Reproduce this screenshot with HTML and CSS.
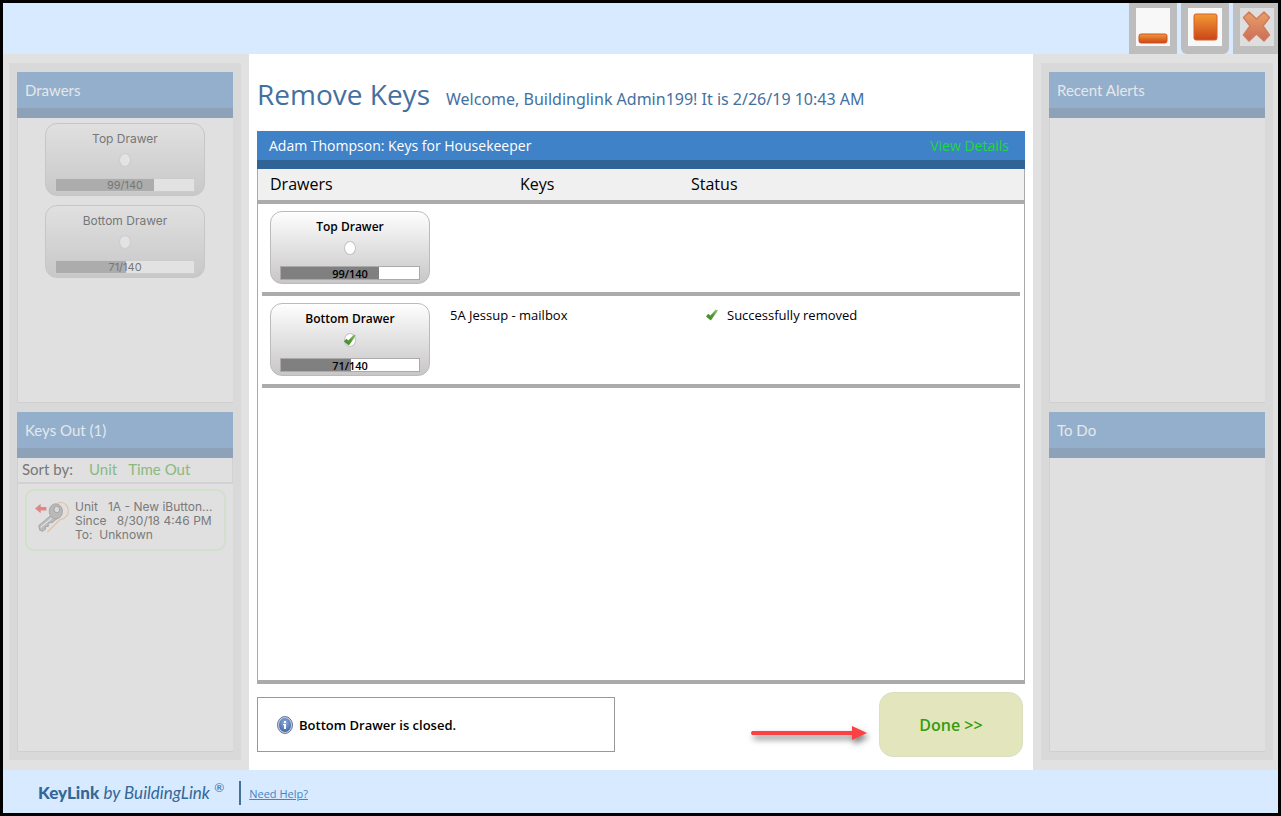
FILE: index.html
```html
<!DOCTYPE html>
<html lang="en">
<head>
<meta charset="utf-8">
<title>KeyLink - Remove Keys</title>
<link rel="stylesheet" href="styles.css">
</head>
<body>
<svg class="defs" aria-hidden="true">
  <defs>
    <linearGradient id="orange" x1="0" y1="0" x2="0" y2="1"><stop offset="0" stop-color="#f39a35"/><stop offset="1" stop-color="#cb4418"/></linearGradient>
    <linearGradient id="coral" x1="0" y1="0" x2="0" y2="1"><stop offset="0" stop-color="#e8a068"/><stop offset="1" stop-color="#cb6d58"/></linearGradient>
    <linearGradient id="green" x1="0" y1="1" x2="1" y2="0"><stop offset="0" stop-color="#3f8a2a"/><stop offset=".5" stop-color="#559632"/><stop offset="1" stop-color="#9cc884"/></linearGradient>
    <radialGradient id="info" cx=".5" cy=".35" r=".65"><stop offset="0" stop-color="#8fb2e2"/><stop offset="1" stop-color="#4464a4"/></radialGradient>
    <symbol id="tick" viewBox="0 0 12 12"><path d="M0 7.400 2.200 4.800 4.400 6.400 9.800.6 12 1.400 4.800 11.400Z" fill="url(#green)"/></symbol>
  </defs>
</svg>
<header class="titlebar">
  <button class="win" aria-label="Minimize"><svg viewBox="0 0 34 38"><rect x="3" y="26" width="28" height="9" rx="2" fill="url(#orange)" stroke="#cf5328"/></svg></button>
  <button class="win win-round" aria-label="Maximize"><svg viewBox="0 0 34 38"><rect x="6" y="6" width="23" height="26" rx="2" fill="url(#orange)" stroke="#d2602e"/></svg></button>
  <button class="win win-dim" aria-label="Close"><svg viewBox="0 0 34 38"><path d="M9 4 16.500 11 24 4 29.500 9.500 23 18 29.500 27 24 33 16.500 26 9 33 3.500 27 10 18 3.500 9.500Z" fill="url(#coral)" stroke="#d17c5e" stroke-width="1.500" stroke-linejoin="round"/></svg></button>
</header>
<div class="workspace">
  <aside class="side">
    <div class="side-inner">
      <section class="panel">
        <h2 class="panel-title">Drawers</h2>
        <div class="drawer-list">
          <div class="drawer muted"><span class="drawer-name">Top Drawer</span><span class="dot"></span><div class="bar"><span class="fill" style="width:70.7%"></span><span class="count">99/140</span></div></div>
          <div class="drawer muted"><span class="drawer-name">Bottom Drawer</span><span class="dot"></span><div class="bar"><span class="fill" style="width:50.7%"></span><span class="count">71/140</span></div></div>
        </div>
      </section>
      <section class="panel">
        <h2 class="panel-title">Keys Out (1)</h2>
        <div class="sort"><span class="sort-label">Sort by:</span><a href="#unit">Unit</a><a href="#time">Time Out</a></div>
        <div class="key-card">
          <svg class="key-icon" viewBox="0 0 38 36">
            <path d="M24 2C32 0 36 6 35 13 34 17 30 19 26 20L13 33" fill="none" stroke="#e3c4a0" stroke-width="1.300"/>
            <path d="M0 8 6 3V6.500H12V10H6V13Z" fill="#dd8886"/>
            <path d="M17 15 4 26 5 31 8 32 11 30V27L14 27V23L18 23 24 18Z" fill="#bbb" stroke="#a4a4a4"/>
            <path d="M6 28 19 17" stroke="#ddd" stroke-width="1.500"/>
            <ellipse cx="22" cy="11" rx="7" ry="8" fill="#b9b9b9" stroke="#a4a4a4"/>
            <ellipse cx="23" cy="9" rx="3" ry="3.500" fill="#d9d9d9" stroke="#a0a0a0"/>
          </svg>
          <div class="key-text"><div>Unit&nbsp;&nbsp; 1A - New iButton...</div><div>Since&nbsp;&nbsp; 8/30/18 4:46 PM</div><div>To:&nbsp; Unknown</div></div>
        </div>
      </section>
    </div>
  </aside>
  <main class="center">
    <div class="heading"><h1>Remove Keys</h1><p>Welcome, Buildinglink Admin199! It is 2/26/19 10:43 AM</p></div>
    <section class="task">
      <div class="task-bar"><h2>Adam Thompson: Keys for Housekeeper</h2><a href="#details">View Details</a></div>
      <div class="task-body">
        <table>
          <colgroup><col class="c1"><col class="c2"><col></colgroup>
          <thead><tr><th>Drawers</th><th class="th-keys">Keys</th><th>Status</th></tr></thead>
          <tbody>
            <tr><td class="td-drawer"><div class="drawer"><span class="drawer-name">Top Drawer</span><span class="dot"></span><div class="bar"><span class="fill" style="width:70.7%"></span><span class="count">99/140</span></div></div></td><td></td><td></td></tr>
            <tr><td class="td-drawer"><div class="drawer"><span class="drawer-name">Bottom Drawer</span><span class="dot"><svg class="tick"><use href="#tick"/></svg></span><div class="bar"><span class="fill" style="width:50.7%"></span><span class="count">71/140</span></div></div></td><td>5A Jessup - mailbox</td><td><div class="status"><svg class="tick"><use href="#tick"/></svg>Successfully removed</div></td></tr>
          </tbody>
        </table>
      </div>
    </section>
    <div class="actions">
      <div class="message" role="status">
        <svg class="info" viewBox="0 0 16 18"><ellipse cx="8" cy="9" rx="7.500" ry="8.500" fill="#c3cfe2" stroke="#64769c"/><ellipse cx="8" cy="9" rx="6" ry="7" fill="url(#info)"/><path d="M7 5h2v2H7zM6 8h3v5H7V9H6z" fill="#fff"/></svg>
        Bottom Drawer is closed.
      </div>
      <svg class="arrow" viewBox="0 0 118 48" aria-hidden="true"><path d="M2 22H102V17L117 24 102 31V26H2Q0 24 2 22Z" fill="#fb4143"/></svg>
      <button class="done">Done &gt;&gt;</button>
    </div>
  </main>
  <aside class="side">
    <div class="side-inner">
      <section class="panel"><h2 class="panel-title">Recent Alerts</h2></section>
      <section class="panel"><h2 class="panel-title">To Do</h2></section>
    </div>
  </aside>
</div>
<footer class="footer">
  <div class="brand"><b>KeyLink</b> <i>by BuildingLink</i> <sup>®</sup></div>
  <a class="help" href="#help">Need Help?</a>
</footer>
</body>
</html>
```
FILE: styles.css
```css
* { box-sizing: border-box; }
body {
  margin: 0;
  min-height: 100vh;
  border: 3px solid #000;
  display: flex;
  flex-direction: column;
  background: #d8eaff;
  font-family: "Open Sans", "Noto Sans", sans-serif;
  font-size: 14px;
  color: #000;
}
h1, h2, p { margin: 0; font-weight: 400; }
button { font: inherit; cursor: pointer; }
.defs { position: absolute; width: 0; height: 0; }

.titlebar { height: 51px; display: flex; justify-content: flex-end; gap: 4px; }
.win { width: 48px; padding: 4px 7px 8px; border: 0; background: #bdbdbd; }
.win svg { display: block; width: 34px; height: 38px; background: #f8f8f8; }
.win-round { border-radius: 0 0 6px 6px; }
.win-dim { width: 45px; padding-right: 4px; background: #bfbfbf; }
.win-dim svg { background: #dedede; }

.workspace { flex: 1; display: grid; grid-template-columns: 246px 1fr 245px; }
.side { display: flex; padding: 9px 8px 10px 6px; background: #e1e1e1; }
.center + .side { padding: 9px 5px 10px 8px; }
.side-inner { flex: 1; display: grid; grid-template-rows: 331fr 339fr; gap: 9px; padding: 9px 8px 8px; background: #d9d9d9; }
.panel { background: #e0e0e0; border: solid #d0d0d0; border-width: 0 0 1px 1px; }
.panel-title {
  height: 46px;
  margin-left: -1px;
  padding: 0 8px;
  border-bottom: 10px solid #8da2b8;
  background: #94afcb;
  color: #e4e8ec;
  font: 15px/36px Lato, sans-serif;
}
.drawer-list { display: flex; flex-direction: column; align-items: center; gap: 9px; padding: 5px 1px 0 0; }

.drawer {
  width: 160px;
  height: 73px;
  padding: 6px 9px 0;
  display: flex;
  flex-direction: column;
  align-items: center;
  border: 1px solid #bbb;
  border-radius: 12px;
  background: linear-gradient(#fefefe, #c8c6c6);
}
.drawer-name { font-size: 12px; font-weight: 600; line-height: 18px; }
.dot { width: 12px; height: 14px; margin: 5px 0 11px; border: 1px solid #c3c3c3; border-radius: 50%; background: #fff; }
.bar { position: relative; width: 140px; height: 14px; border: 1px solid #aaa; background: #fff; }
.fill { display: block; height: 100%; background: #808080; }
.count { position: absolute; inset: 0; text-align: center; font-size: 11px; font-weight: 600; line-height: 13px; }
.muted { border-color: #c6c6c6; background: linear-gradient(#e0e0e0, #c9c8c8); color: #777; }
.muted .drawer-name, .muted .count { font-family: Inter, sans-serif; font-weight: 400; }
.muted .dot { border-color: #ccc; background: #e3e3e3; }
.muted .bar { border-color: #ccc; background: #e2e2e2; }
.muted .fill { background: #acacac; }
.tick { display: block; width: 12px; height: 12px; flex: none; }
.dot .tick { margin-left: -1px; }

.sort { display: flex; gap: 11px; height: 26px; padding-left: 4px; border: solid #d2d2d2; border-width: 0 1px 2px 0; font: 15px/23px Lato, sans-serif; color: #777; }
.sort-label { margin-right: 5px; }
.sort a { color: #8ab982; text-decoration: none; }
.key-card { display: flex; gap: 4px; margin: 5px 7px 0; height: 62px; padding: 9px 0 0 8px; border: 2px solid #d0e0cb; border-radius: 9px; }
.key-icon { width: 36px; height: 36px; flex: none; }
.key-text { font: 12px/14px Inter, sans-serif; color: #7a7a7a; white-space: nowrap; }

.center { display: flex; flex-direction: column; padding: 0 8px 13px; background: #fff; }
.heading { display: flex; align-items: baseline; gap: 16px; height: 77px; padding-top: 16px; color: #44709f; }
h1 { font-size: 28px; line-height: 48px; }
.heading p { font-family: "Noto Sans", sans-serif; font-size: 16px; }
.task { flex: 1; display: flex; flex-direction: column; }
.task-bar { height: 38px; display: flex; justify-content: space-between; padding: 0 16px 0 12px; border-bottom: 9px solid #316496; background: #3f82c8; line-height: 29px; }
.task-bar h2 { font-size: 14px; color: #fff; }
.task-bar a { color: #1fd83c; text-decoration: none; }
.task-body { flex: 1; border: solid #aaa; border-width: 0 1px 4px; }
table { width: 100%; border-collapse: separate; border-spacing: 0; table-layout: fixed; }
.c1 { width: 192px; }
.c2 { width: 241px; }
th { height: 35px; padding: 0 0 1px; border-bottom: 4px solid #ababab; background: #f0f0f0; text-align: left; font-size: 16px; line-height: 24px; font-weight: 400; }
th:first-child { padding-left: 12px; }
.th-keys { padding-left: 70px; }
tbody tr { background: linear-gradient(#ababab, #ababab) center bottom / calc(100% - 8px) 4px no-repeat; }
td { height: 92px; padding: 9px 0 0; vertical-align: top; font-size: 13px; line-height: 20px; }
.td-drawer { padding: 7px 0 0 12px; }
.status { display: flex; align-items: center; gap: 9px; padding-left: 15px; }

.actions { display: flex; align-items: center; padding: 8px 2px 0 0; }
.message { width: 358px; height: 55px; display: flex; align-items: center; gap: 6px; padding-left: 19px; border: 1px solid #999; font-size: 13px; font-weight: 600; }
.info { width: 16px; height: 18px; }
.arrow { width: 118px; height: 48px; margin-left: auto; align-self: flex-end; filter: drop-shadow(2px 4px 3px #777); }
.done { width: 144px; height: 65px; margin-left: 11px; border: 1px solid #dadfc0; border-radius: 14px; background: #e3e6bc; color: #369b0e; font-size: 16px; font-weight: 600; }

.footer { height: 43px; display: flex; align-items: center; padding: 3px 0 0 35px; color: #336798; }
.brand { padding-right: 15px; border-right: 2px solid #44709f; font: 17px/24px Lato, sans-serif; }
.brand b { font-weight: 900; }
.brand sup { font-size: 12px; line-height: 1px; }
.help { margin-left: 8px; color: #4684bf; font-size: 11px; }
```
